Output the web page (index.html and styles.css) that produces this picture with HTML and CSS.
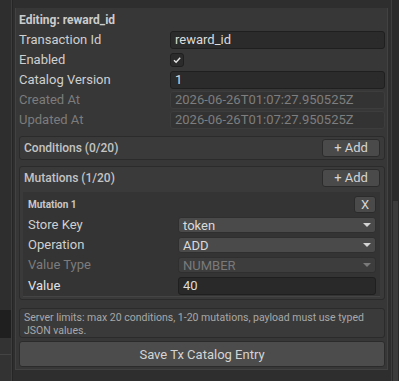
FILE: index.html
```html
<!DOCTYPE html>
<html lang="en">
<head>
  <meta charset="UTF-8">
  <title>Tx Catalog Editor</title>
  <link rel="stylesheet" href="styles.css">
</head>
<body>
  <div class="app">
    <div class="side">
      <div class="side-top"></div>
      <div class="side-dark"></div>
      <div class="side-row"></div>
    </div>

    <div class="frame">
      <div class="panel">
        <div class="title">Editing: reward_id</div>

        <div class="form">
          <label>Transaction Id</label>
          <div class="field">reward_id</div>

          <label>Enabled</label>
          <div><span class="check">
            <svg width="10" height="10" viewBox="0 0 10 10"><path d="M2 5.3 L4.1 7.3 L8.2 2.7" fill="none" stroke="#e6e6e6" stroke-width="1.4"/></svg>
          </span></div>

          <label>Catalog Version</label>
          <div class="field">1</div>

          <label class="off">Created At</label>
          <div class="field disabled">2026-06-26T01:07:27.950525Z</div>

          <label class="off">Updated At</label>
          <div class="field disabled">2026-06-26T01:07:27.950525Z</div>
        </div>

        <div class="section first">
          <div class="section-head">
            <span>Conditions (0/20)</span>
            <button class="btn add">+ Add</button>
          </div>
        </div>

        <div class="section">
          <div class="section-head">
            <span>Mutations (1/20)</span>
            <button class="btn add">+ Add</button>
          </div>

          <div class="item">
            <div class="item-head">
              <span>Mutation 1</span>
              <button class="btn remove">X</button>
            </div>
            <div class="form inner">
              <label>Store Key</label>
              <div class="combo">token</div>

              <label>Operation</label>
              <div class="combo">ADD</div>

              <label class="off">Value Type</label>
              <div class="combo disabled">NUMBER</div>

              <label class="hi">Value</label>
              <div class="field tall">40</div>
            </div>
          </div>
        </div>

        <div class="note">Server limits: max 20 conditions, 1-20 mutations, payload must use typed JSON values.</div>

        <button class="btn save">Save Tx Catalog Entry</button>
      </div>
    </div>

    <div class="scroll"><div class="thumb"></div></div>
  </div>
</body>
</html>
```

FILE: styles.css
```css
body {
  margin: 0;
  background-color: #2a2a2a;
  font-family: Roboto, "Noto Sans", sans-serif;
  font-size: 13px;
  color: #d2d2d2;
}

.app {
  display: flex;
  height: 381px;
  overflow: hidden;
}

.side {
  width: 11px;
  display: flex;
  flex-direction: column;
  background-color: #333333;
  border-right: 1px solid #3d3d3d;
}

.side-top {
  height: 310px;
  background-color: #2e2e2e;
}

.side-dark {
  height: 28px;
  background-color: #1f1f1f;
}

.side-row {
  height: 16px;
  border-bottom: 1px solid #444444;
}

.frame {
  width: 373px;
  padding: 8px 3px 4px 2px;
  background-color: #2e2e2e;
  border-right: 1px solid #3d3d3d;
  border-left: 1px solid #262626;
}

.panel {
  height: 362px;
  background-color: #373737;
  border: 1px solid #424242;
  border-top: none;
  padding: 3px 2px 0 3px;
  box-sizing: border-box;
}

.scroll {
  flex: 1;
  padding: 0 1px;
  display: flex;
  flex-direction: column;
  justify-content: flex-end;
}

.thumb {
  height: 180px;
  background-color: #3c3c3c;
}

.title {
  font-size: 12px;
  font-weight: 700;
  height: 18px;
  line-height: 18px;
  margin-bottom: 2px;
  color: #cccccc;
}

.form {
  display: grid;
  grid-template-columns: 151px 1fr;
  row-gap: 2px;
  align-items: center;
}

label {
  line-height: 18px;
  color: #cfcfcf;
}

label.off {
  color: #7c7c7c;
}

label.hi {
  color: #e2e2e2;
}

.field {
  height: 18px;
  line-height: 16px;
  box-sizing: border-box;
  padding: 0 4px;
  background-color: #2b2b2b;
  border: 1px solid #1f1f1f;
  border-radius: 3px;
  color: #dcdcdc;
}

.field.disabled {
  background-color: #333333;
  border-color: #3d3d3d;
  color: #7e7e7e;
}

.check {
  display: flex;
  align-items: center;
  justify-content: center;
  width: 14px;
  height: 14px;
  box-sizing: border-box;
  background-color: #2b2b2b;
  border: 1px solid #1f1f1f;
  border-radius: 3px;
}

.section {
  margin-top: 6px;
  background-color: #3a3a3a;
  border: 1px solid #2b2b2b;
  border-radius: 3px;
  padding: 0 4px 2px 3px;
}

.section.first {
  margin-top: 7px;
  padding-bottom: 0;
}

.section-head {
  display: flex;
  justify-content: space-between;
  align-items: center;
  height: 22px;
  padding-left: 1px;
  font-size: 12px;
  font-weight: 500;
  color: #c4c4c4;
}

.btn {
  font-family: inherit;
  font-size: 13px;
  color: #d4d4d4;
  background-color: #4a4a4a;
  border: 1px solid #2b2b2b;
  border-radius: 3px;
  padding: 0;
  cursor: pointer;
}

.add {
  width: 58px;
  height: 18px;
  line-height: 16px;
}

.item {
  margin-top: 3px;
  background-color: #343434;
  border-bottom: 1px solid #444444;
  padding: 3px 4px 1px 4px;
}

.item-head {
  display: flex;
  justify-content: space-between;
  align-items: center;
  height: 19px;
  padding-left: 1px;
  font-size: 10px;
  font-weight: 700;
  color: #c8c8c8;
}

.remove {
  width: 22px;
  height: 17px;
  line-height: 15px;
}

.form.inner {
  grid-template-columns: 150px 1fr;
  row-gap: 4px;
  margin-top: 3px;
  padding-left: 1px;
}

.inner label {
  line-height: 16px;
}

.combo {
  position: relative;
  height: 16px;
  line-height: 15px;
  box-sizing: border-box;
  padding: 0 4px;
  background-color: #4a4a4a;
  border: 1px solid #2f2f2f;
  border-radius: 3px;
  color: #dadada;
}

.combo::after {
  content: "";
  position: absolute;
  right: 4px;
  top: 5px;
  border-left: 4px solid transparent;
  border-right: 4px solid transparent;
  border-top: 4px solid #d4d4d4;
}

.combo.disabled {
  background-color: #3d3d3d;
  color: #7a7a7a;
}

.combo.disabled::after {
  border-top-color: #7a7a7a;
}

.field.tall {
  height: 18px;
  background-color: #292929;
}

.note {
  margin-top: 8px;
  padding: 2px 4px 0 4px;
  background-color: #3a3a3a;
  border: 1px solid #2b2b2b;
  border-radius: 3px;
  font-size: 10.5px;
  line-height: 13px;
  color: #a8a8a8;
}

.save {
  display: block;
  width: 100%;
  height: 26px;
  margin-top: 3px;
  background-color: #4c4c4c;
}
```
